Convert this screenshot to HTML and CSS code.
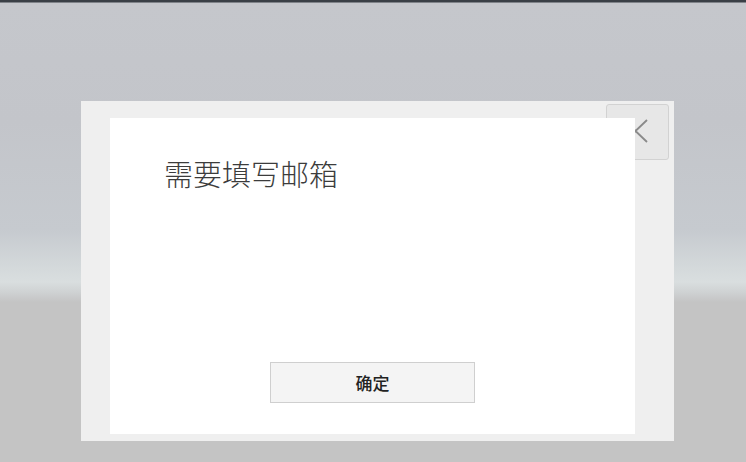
FILE: index.html
```html
<!DOCTYPE html>
<html lang="zh-CN">
<head>
  <meta charset="UTF-8">
  <title>提示</title>
<link rel="stylesheet" href="styles.css">
</head>
<body>
<div class="scene">
  <div class="dialog">
    <button class="close" type="button" aria-label="关闭">
      <svg width="63" height="56" viewBox="0 0 63 56">
        <path d="M18 16 L41 38 M18 38 L41 16" stroke="#8a8a8a" stroke-width="1.8" fill="none"/>
      </svg>
    </button>
    <div class="panel">
      <h1 class="title">需要填写邮箱</h1>
      <button class="ok" type="button">确定</button>
    </div>
  </div>
</div>
</body>
</html>
```

FILE: styles.css
```css
* {
  box-sizing: border-box;
}
html, body {
  margin: 0;
  height: 100%;
}
body {
  font-family: "Noto Sans CJK SC", "Noto Sans", sans-serif;
  background: linear-gradient(to bottom,
    #3a3f46 0, #3a3f46 2px,
    #c5c7cc 3px, #c3c5ca 120px, #c6cacf 230px,
    #d3d8da 265px, #d9dedf 282px, #cfd2d3 292px,
    #c4c4c4 302px, #c4c4c4 100%);
  overflow: hidden;
}
.scene {
  padding: 101px 0 0 81px;
}
.dialog {
  position: relative;
  width: 593px;
  height: 340px;
  background: #efefef;
  padding: 17px 39px 7px 29px;
}
.close {
  position: absolute;
  left: 525px;
  top: 3px;
  width: 63px;
  height: 56px;
  padding: 0;
  border: 1px solid #d2d2d2;
  border-radius: 3px;
  background: #e7e7e7;
  z-index: 0;
}
.close svg {
  display: block;
  margin: -1px;
}
.panel {
  position: relative;
  z-index: 1;
  height: 100%;
  background: #fff;
  display: flex;
  flex-direction: column;
  align-items: flex-start;
}
.title {
  margin: 41px 0 0 54px;
  font-size: 29px;
  line-height: 29px;
  font-weight: 300;
  color: #3c3c3c;
}
.ok {
  margin: auto 0 31px;
  align-self: center;
  width: 205px;
  height: 41px;
  border: 1px solid #cfcfcf;
  background: #f4f4f4;
  font-family: "Noto Sans CJK SC", sans-serif;
  font-size: 17px;
  font-weight: 500;
  color: #222;
  padding: 0;
}
```
